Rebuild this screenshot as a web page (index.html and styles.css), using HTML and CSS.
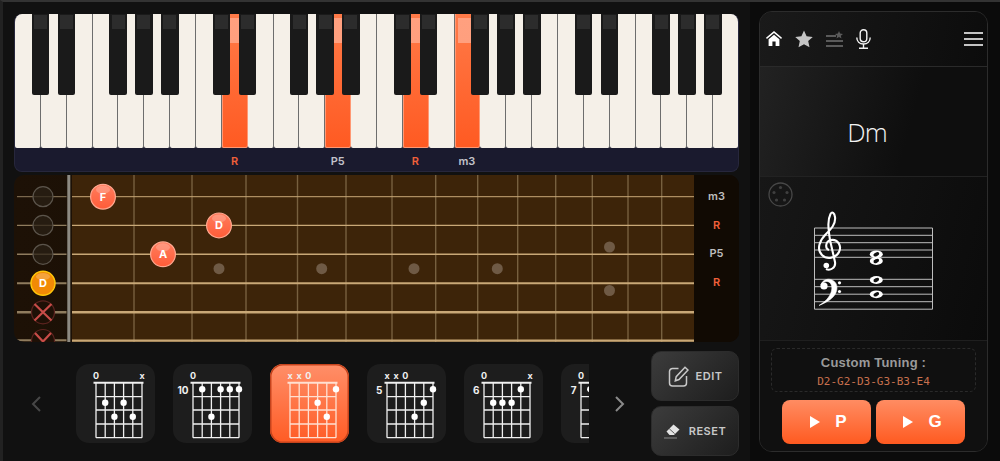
FILE: index.html
```html
<!DOCTYPE html>
<html lang="en">
<head>
    <meta charset="UTF-8">
    <title>Chords</title>
    <link rel="stylesheet" href="styles.css">
</head>
<body>
<svg class="defs" width="0" height="0">
    <defs>
        <symbol id="grid" viewBox="0 0 79 79">
            <path d="M17.5 18.7H67.5" stroke="currentColor" stroke-width="2" fill="none"/>
            <path d="M20 18.7V73.7M29.2 18.7V73.7M38.4 18.7V73.7M47.6 18.7V73.7M56.8 18.7V73.7M66 18.7V73.7M20 32.7H66M20 46H66M20 60H66M20 73.7H66" stroke="currentColor" stroke-width="1.3" fill="none"/>
        </symbol>
        <linearGradient id="noteFill" x1="0" y1="0" x2="0" y2="1">
            <stop offset="0" stop-color="#ff7d5e"/>
            <stop offset="1" stop-color="#ff5c38"/>
        </linearGradient>
        <g id="note">
            <circle r="12.4" fill="url(#noteFill)" stroke="#ffa890" stroke-width="1.2"/>
            <ellipse cy="-7" rx="7" ry="4" fill="#fff" opacity="0.22"/>
        </g>
        <g id="whole">
            <ellipse rx="6.5" ry="3.9" fill="#fff"/>
            <ellipse rx="3" ry="1.8" fill="#111" transform="rotate(-25)"/>
        </g>
    </defs>
</svg>

<div class="main">
    <!-- piano -->
    <div class="piano">
        <div class="keys">
            <div class="key sharp"></div>
            <div class="key sharp"></div>
            <div class="key"></div>
            <div class="key sharp"></div>
            <div class="key sharp"></div>
            <div class="key sharp"></div>
            <div class="key"></div>
            <div class="key sharp"></div>
            <div class="key sharp on"></div>
            <div class="key"></div>
            <div class="key sharp"></div>
            <div class="key sharp"></div>
            <div class="key sharp on"></div>
            <div class="key"></div>
            <div class="key sharp"></div>
            <div class="key sharp on"></div>
            <div class="key"></div>
            <div class="key sharp on"></div>
            <div class="key sharp"></div>
            <div class="key sharp"></div>
            <div class="key"></div>
            <div class="key sharp"></div>
            <div class="key sharp"></div>
            <div class="key"></div>
            <div class="key sharp"></div>
            <div class="key sharp"></div>
            <div class="key sharp"></div>
            <div class="key"></div>
        </div>
        <div class="key_labels">
            <span class="root" style="grid-column: 9">R</span>
            <span style="grid-column: 13">P5</span>
            <span class="root" style="grid-column: 16">R</span>
            <span style="grid-column: 18">m3</span>
        </div>
    </div>

    <!-- fretboard -->
    <div class="fretboard">
        <svg class="open_strings" width="58" height="167" viewBox="14 175 58 167">
            <g stroke="#8f7c5e" fill="none">
                <path d="M17 196.7H66.5" stroke-width="1"/>
                <path d="M17 225.4H66.5" stroke-width="1.2"/>
                <path d="M17 254.3H66.5" stroke-width="1.5"/>
                <path d="M17 283.3H66.5" stroke-width="2"/>
                <path d="M17 312.3H66.5" stroke-width="2.5"/>
                <path d="M17 340.2H66.5" stroke-width="2"/>
            </g>
            <g fill="#2a2016" fill-opacity="0.75" stroke="#5b544b" stroke-width="1.2">
                <circle cx="43" cy="196.7" r="10"/>
                <circle cx="43" cy="225.4" r="10"/>
                <circle cx="43" cy="254.3" r="10"/>
            </g>
            <circle cx="43" cy="283.2" r="12" fill="#f28a06" stroke="#ffc60a" stroke-width="1.5"/>
            <ellipse cx="43" cy="276.5" rx="7" ry="3.6" fill="#fff" opacity="0.22"/>
            <text class="note_text" x="43" y="287">D</text>
            <g fill="#1e1006" stroke="#5c2420" stroke-width="1.2">
                <circle cx="43" cy="312.3" r="11.5"/>
                <circle cx="43" cy="341" r="11.5"/>
            </g>
            <path d="M34.5 304L51.5 320.5M51.5 304L34.5 320.5M35 333L43 341.5L51 333" stroke="#c84c48" stroke-width="2.2" fill="none"/>
            <rect x="67.3" y="175" width="3" height="167" fill="#8d8a82"/>
        </svg>
        <svg class="board" width="622" height="167" viewBox="72 175 622 167">
            <rect x="72" y="175" width="622" height="167" fill="#3d2409"/>
            <path d="M134 175V342M192 175V342M246 175V342M297.5 175V342M346 175V342M392 175V342M435.7 175V342M477.7 175V342M517.7 175V342M555.7 175V342M592.3 175V342M628 175V342M661.7 175V342" stroke="#77603f" stroke-width="1.4" fill="none"/>
            <g fill="#6f5a45">
                <circle cx="219" cy="268.7" r="5.5"/>
                <circle cx="321.7" cy="268.7" r="5.5"/>
                <circle cx="414" cy="268.7" r="5.5"/>
                <circle cx="497.3" cy="268.7" r="5.5"/>
                <circle cx="609.5" cy="247" r="5.5"/>
                <circle cx="609.5" cy="290.5" r="5.5"/>
            </g>
            <g stroke="#c9a877" fill="none">
                <path d="M72 196.7H694" stroke-width="1"/>
                <path d="M72 225.4H694" stroke-width="1.3"/>
                <path d="M72 254.3H694" stroke-width="1.5"/>
                <path d="M72 283.3H694" stroke-width="2"/>
                <path d="M72 312.3H694" stroke-width="2.6"/>
                <path d="M72 340.6H694" stroke-width="2.4"/>
            </g>
            <use href="#note" x="103" y="196.7"/>
            <text class="note_text" x="103" y="200.5">F</text>
            <use href="#note" x="219" y="225.4"/>
            <text class="note_text" x="219" y="229.2">D</text>
            <use href="#note" x="163" y="254.3"/>
            <text class="note_text" x="163" y="258.1">A</text>
        </svg>
        <div class="string_labels">
            <span>m3</span>
            <span class="root">R</span>
            <span>P5</span>
            <span class="root">R</span>
        </div>
    </div>

    <!-- chord shapes -->
    <div class="chord_row">
        <svg class="arrow prev" width="10" height="16" viewBox="0 0 10 16"><path d="M9 1L2 8L9 15" fill="none" stroke="#474747" stroke-width="2"/></svg>
        <div class="chord_list">
            <div class="chord_card">
                <svg class="shape" width="79" height="79" viewBox="0 0 79 79">
                    <use href="#grid"/>
                    <text x="20" y="15">0</text><text x="66" y="15">x</text>
                    <circle cx="29.2" cy="38.7" r="3.2"/><circle cx="47.6" cy="38.7" r="3.2"/>
                    <circle cx="38.4" cy="52.7" r="3.2"/><circle cx="56.8" cy="52.7" r="3.2"/>
                </svg>
            </div>
            <div class="chord_card">
                <svg class="shape" width="79" height="79" viewBox="0 0 79 79">
                    <use href="#grid"/>
                    <text x="20" y="15">0</text><text class="fret_no" x="15.5" y="29.5">10</text>
                    <circle cx="29.2" cy="25.3" r="3.2"/><circle cx="47.6" cy="25.3" r="3.2"/><circle cx="56.8" cy="25.3" r="3.2"/><circle cx="66" cy="25.3" r="3.2"/>
                    <circle cx="38.4" cy="52.7" r="3.2"/>
                </svg>
            </div>
            <div class="chord_card active">
                <svg class="shape" width="79" height="79" viewBox="0 0 79 79">
                    <use href="#grid"/>
                    <text x="20" y="15">x</text><text x="29.2" y="15">x</text><text x="38.4" y="15">0</text>
                    <circle cx="66" cy="25.3" r="3.2"/>
                    <circle cx="47.6" cy="38.7" r="3.2"/>
                    <circle cx="56.8" cy="52.7" r="3.2"/>
                </svg>
            </div>
            <div class="chord_card">
                <svg class="shape" width="79" height="79" viewBox="0 0 79 79">
                    <use href="#grid"/>
                    <text x="20" y="15">x</text><text x="29.2" y="15">x</text><text x="38.4" y="15">0</text><text class="fret_no" x="15.5" y="29.5">5</text>
                    <circle cx="66" cy="25.3" r="3.2"/>
                    <circle cx="56.8" cy="38.7" r="3.2"/>
                    <circle cx="47.6" cy="52.7" r="3.2"/>
                </svg>
            </div>
            <div class="chord_card">
                <svg class="shape" width="79" height="79" viewBox="0 0 79 79">
                    <use href="#grid"/>
                    <text x="20" y="15">0</text><text x="66" y="15">x</text><text class="fret_no" x="15.5" y="29.5">6</text>
                    <circle cx="56.8" cy="25.3" r="3.2"/>
                    <circle cx="29.2" cy="38.7" r="3.2"/><circle cx="38.4" cy="38.7" r="3.2"/><circle cx="47.6" cy="38.7" r="3.2"/>
                </svg>
            </div>
            <div class="chord_card">
                <svg class="shape" width="79" height="79" viewBox="0 0 79 79">
                    <use href="#grid"/>
                    <text x="20" y="15">0</text><text class="fret_no" x="15.5" y="29.5">7</text>
                    <circle cx="29.2" cy="25.3" r="3.2"/>
                </svg>
            </div>
        </div>
        <svg class="arrow next" width="10" height="16" viewBox="0 0 10 16"><path d="M1 1L8 8L1 15" fill="none" stroke="#8a8a8a" stroke-width="2"/></svg>
        <div class="actions">
            <div class="action_btn edit">
                <svg width="21" height="21" viewBox="0 0 21 21" fill="none" stroke="#c8c8c8" stroke-width="1.5">
                    <path d="M10.5 2.5H4.5a3 3 0 0 0-3 3V17a3 3 0 0 0 3 3H15.5a3 3 0 0 0 3-3V10"/>
                    <path d="M17 1.2L20 4L11 13.5L7.3 14.8L8.2 10.7Z"/>
                </svg>
                <span>EDIT</span>
            </div>
            <div class="action_btn reset">
                <svg width="16" height="15" viewBox="0 0 16 15">
                    <path d="M9.5 0.5L15.5 5.5L10 11L5.5 11L2.5 7.5Z" fill="#e4e4e4"/>
                    <path d="M5.3 4.8L10.6 9.6" stroke="#3a3a3a" stroke-width="0.8"/>
                    <path d="M0 14H13" stroke="#8a8a8a" stroke-width="1"/>
                </svg>
                <span>RESET</span>
            </div>
        </div>
    </div>
</div>

<!-- right panel -->
<div class="panel">
    <div class="panel_nav">
        <svg width="16" height="15" viewBox="0 0 16 15" fill="#fff">
            <path d="M8 0L0 6.8L0.9 7.9L8 2L15.1 7.9L16 6.8Z"/>
            <path d="M2.6 8.2L8 3.7L13.4 8.2V15H9.6V10.6H6.4V15H2.6Z"/>
        </svg>
        <svg width="18" height="18" viewBox="0 0 18 18" fill="#c4c4c4">
            <path d="M9 0.5L11.6 6.2L17.8 6.9L13.2 11.1L14.5 17.3L9 14.2L3.5 17.3L4.8 11.1L0.2 6.9L6.4 6.2Z"/>
        </svg>
        <svg width="17" height="16" viewBox="0 0 17 16" fill="#5a5a5a">
            <rect x="0" y="4" width="10" height="2"/>
            <rect x="0" y="9" width="17" height="2"/>
            <rect x="0" y="14" width="17" height="2"/>
            <path d="M13 0L14.1 2.6L17 2.9L14.8 4.8L15.5 7.6L13 6.1L10.5 7.6L11.2 4.8L9 2.9L11.9 2.6Z"/>
        </svg>
        <svg width="15" height="20" viewBox="0 0 15 20" fill="none" stroke="#f2f2f2" stroke-width="1.4">
            <rect x="4.2" y="0.7" width="6.6" height="12" rx="3.3"/>
            <path d="M0.8 8.5C0.8 12.5 3.5 15 7.5 15C11.5 15 14.2 12.5 14.2 8.5"/>
            <path d="M7.5 15V19.3M3 19.3H12"/>
        </svg>
        <div class="menu_icon"><i></i><i></i><i></i></div>
    </div>
    <div class="chord_name">Dm</div>
    <div class="staff_area">
        <svg class="circle_icon" width="25" height="25" viewBox="0 0 25 25">
            <circle cx="12.5" cy="12.5" r="11.5" fill="none" stroke="#474747" stroke-width="1.3"/>
            <g fill="#3f3f3f">
                <circle cx="12.5" cy="5.5" r="1.6"/>
                <circle cx="19" cy="10.5" r="1.6"/>
                <circle cx="16.5" cy="18" r="1.6"/>
                <circle cx="8.5" cy="18" r="1.6"/>
                <circle cx="6" cy="10.5" r="1.6"/>
            </g>
        </svg>
        <svg class="staff" width="130" height="106" viewBox="810 207 130 106">
            <g stroke="#bdbdbd" stroke-width="1" fill="none">
                <path d="M814.5 228H932.5M814.5 235.3H932.5M814.5 242.7H932.5M814.5 250H932.5M814.5 257.3H932.5"/>
                <path d="M814.5 279.3H932.5M814.5 286.7H932.5M814.5 294.2H932.5M814.5 301.7H932.5M814.5 309.2H932.5"/>
                <path d="M814.5 228V309.2M932.5 228V309.2"/>
            </g>
            <path d="M829 250C825 249 825 241 831 240C838 239 842 246 839 252C836 258 827 260 822 255C816 249 820 240 826 234C831 229 836 224 835 217C834.5 213 832 211 830.5 214C827.5 220 828 227 830 240L835 262C836 268 830 271 826 269" fill="none" stroke="#fff" stroke-width="2.1"/>
            <circle cx="826.3" cy="265.5" r="2.8" fill="#fff"/>
            <path d="M821 285C822 280 828 278 832 280C839 283 838 292 833 297C829 301 825 303 819 305.5C825 302 830 297 831.5 291C833 285 830 281 826 281.5C824 282 822 283 821 285Z" fill="#fff" stroke="#fff" stroke-width="0.6"/>
            <circle cx="824" cy="286" r="3.6" fill="#fff"/>
            <circle cx="839.5" cy="282.8" r="1.6" fill="#fff"/>
            <circle cx="839.5" cy="291.5" r="1.6" fill="#fff"/>
            <use href="#whole" x="876.3" y="254.3"/>
            <use href="#whole" x="876.3" y="261"/>
            <use href="#whole" x="876.3" y="280"/>
            <use href="#whole" x="876.3" y="294.3"/>
        </svg>
    </div>
    <div class="panel_bottom">
        <div class="tuning">
            <div class="tuning_title">Custom Tuning :</div>
            <div class="tuning_notes">D2-G2-D3-G3-B3-E4</div>
        </div>
        <div class="play_row">
            <div class="play_btn"><i></i><span>P</span></div>
            <div class="play_btn"><i></i><span>G</span></div>
        </div>
    </div>
</div>
</body>
</html>
```

FILE: styles.css
```css
* {
    margin: 0;
    padding: 0;
    box-sizing: border-box;
}
html, body {
    height: 461px;
    overflow: hidden;
}
body {
    display: flex;
    width: 1000px;
    background-color: #0b0b0b;
    border-top: 2px solid #333;
    border-left: 3px solid #222;
    font-family: "Inter", "Liberation Sans", sans-serif;
}
.defs {
    position: absolute;
}
.main {
    width: 747px;
    padding: 12px 11px 0;
    background-color: #111;
}

/* piano */
.piano {
    height: 158px;
    border: 1px solid #27273c;
    border-top: 0;
    border-radius: 8px;
    background-color: #1a1a2e;
    overflow: hidden;
}
.keys {
    display: flex;
    height: 134px;
}
.key {
    position: relative;
    flex: 1;
    background-color: #f5f0e8;
    border-right: 1.5px solid #6d6d6d;
    border-radius: 0 0 2px 2px;
}
.key:last-child {
    border-right: 0;
}
.key.sharp::after {
    content: "";
    position: absolute;
    top: 0;
    right: -9.4px;
    z-index: 2;
    width: 17.4px;
    height: 81px;
    border-radius: 0 0 2px 2px;
    background: linear-gradient(#2c2c2c, #2c2c2c) center 1px / 13px 14px no-repeat, #1a1a1a;
}
.key.on {
    background: linear-gradient(#ffa07f, #ff9f7e) 3px 4px / 20px 25px no-repeat, linear-gradient(#ff7a48, #ff5a22);
    border-right-color: #ff9873;
    box-shadow: inset 1px 0 0 #ff9873, inset 0 -1px 0 #ff9873;
}
.key_labels {
    display: grid;
    grid-template-columns: repeat(28, 1fr);
    height: 23px;
    padding-top: 2px;
    align-items: center;
    text-align: center;
    font-size: 11px;
    font-weight: 600;
    color: #c2c2ca;
}
.key_labels .root,
.string_labels .root {
    color: #f0603a;
}

/* fretboard */
.fretboard {
    display: flex;
    height: 167px;
    margin-top: 3px;
    border-radius: 10px;
    background: linear-gradient(90deg, #1d1106, #130b03);
    overflow: hidden;
}
.fretboard svg {
    display: block;
    flex-shrink: 0;
}
.note_text {
    fill: #fff;
    font-size: 11px;
    font-weight: 700;
    text-anchor: middle;
}
.string_labels {
    display: flex;
    flex-direction: column;
    width: 45px;
    padding-top: 7px;
    background-color: #110a03;
    color: #bdbdbd;
    font-size: 11px;
    font-weight: 600;
    text-align: center;
}
.string_labels span {
    height: 28.7px;
    line-height: 28.7px;
}

/* chord shapes */
.chord_row {
    display: flex;
    align-items: center;
    height: 105px;
    margin-top: 9px;
}
.arrow {
    flex-shrink: 0;
}
.prev {
    margin: 0 35px 0 17px;
}
.next {
    margin: 0 26px;
}
.chord_list {
    display: flex;
    gap: 18px;
    width: 513px;
    overflow: hidden;
}
.chord_card {
    flex-shrink: 0;
    width: 79px;
    height: 79px;
    border-radius: 13px;
    background-color: #1d1d1d;
    color: #f0f0f0;
}
.chord_card.active {
    background: linear-gradient(#ff8f69, #ff5b24);
    box-shadow: inset 0 0 0 1.5px #c5431c;
    color: #ffe0d2;
}
.shape {
    display: block;
}
.shape use {
    color: inherit;
}
.shape circle {
    fill: #fff;
}
.shape text {
    fill: #f0f0f0;
    font-size: 9px;
    font-weight: 700;
    text-anchor: middle;
}
.shape .fret_no {
    text-anchor: end;
    font-size: 10px;
}
.actions {
    display: flex;
    flex-direction: column;
    gap: 5px;
    width: 88px;
    flex-shrink: 0;
}
.action_btn {
    display: flex;
    align-items: center;
    justify-content: center;
    height: 50px;
    border: 1px solid #2c2c2c;
    border-radius: 10px;
    background: linear-gradient(135deg, #3c3c3c, #1d1d1d);
    color: #c8c8c8;
    font-size: 11px;
    font-weight: 600;
    letter-spacing: 0.5px;
}
.edit {
    gap: 7px;
}
.reset {
    gap: 9px;
}

/* right panel */
.panel {
    display: flex;
    flex-direction: column;
    width: 229px;
    height: 441px;
    margin: 9px 0 0 9px;
    border: 1px solid #2c2c2c;
    border-radius: 13px;
    background-color: #0f0f0f;
    overflow: hidden;
}
.panel_nav {
    display: flex;
    align-items: center;
    flex-shrink: 0;
    gap: 13px;
    height: 55px;
    padding: 0 4px 1px 6px;
    border-bottom: 1px solid #2a2a2a;
    background: linear-gradient(100deg, #1a1a1a, #0c0c0c);
}
.menu_icon {
    display: flex;
    flex-direction: column;
    gap: 4px;
    width: 19px;
    margin-left: auto;
}
.menu_icon i {
    display: block;
    height: 2px;
    background-color: #c4c4c4;
}
.chord_name {
    flex-shrink: 0;
    height: 110px;
    padding: 47px 13px 0 0;
    border-bottom: 1px solid #222;
    background: linear-gradient(105deg, #222, #0e0e0e 65%);
    color: #f4f4f4;
    font-family: "Open Sans", sans-serif;
    font-size: 26px;
    font-weight: 300;
    line-height: 36px;
    letter-spacing: -1px;
    text-align: center;
}
.staff_area {
    flex: 1;
    background: linear-gradient(105deg, #171717, #0b0b0b);
}
.circle_icon {
    display: block;
    margin: 5px 0 0 8px;
}
.staff {
    display: block;
    margin-left: 50px;
}
.panel_bottom {
    flex-shrink: 0;
    height: 111px;
    padding: 7px 11px 0;
    border-top: 1px solid #1f1f1f;
    background-color: #101010;
}
.tuning {
    height: 44px;
    padding-top: 6px;
    border: 1px dashed #2a2a2a;
    border-radius: 6px;
    text-align: center;
}
.tuning_title {
    color: #9a9a9a;
    font-family: "Liberation Sans", sans-serif;
    font-size: 13px;
    font-weight: 700;
    line-height: 16px;
    letter-spacing: 0.2px;
}
.tuning_notes {
    margin-top: 4px;
    color: #c8704e;
    font-family: "DejaVu Sans Mono", monospace;
    font-size: 11px;
    line-height: 14px;
}
.play_row {
    display: flex;
    justify-content: center;
    gap: 5px;
    margin-top: 8px;
}
.play_btn {
    display: flex;
    align-items: center;
    justify-content: center;
    gap: 15px;
    width: 89px;
    height: 44px;
    padding-left: 4px;
    border-radius: 8px;
    background: linear-gradient(#ff8c62, #ff5a20);
    color: #fff;
    font-family: "Liberation Sans", sans-serif;
    font-size: 17px;
    font-weight: 700;
}
.play_btn i {
    display: block;
    width: 0;
    height: 0;
    border-left: 10px solid #fff;
    border-top: 6px solid transparent;
    border-bottom: 6px solid transparent;
}
```
